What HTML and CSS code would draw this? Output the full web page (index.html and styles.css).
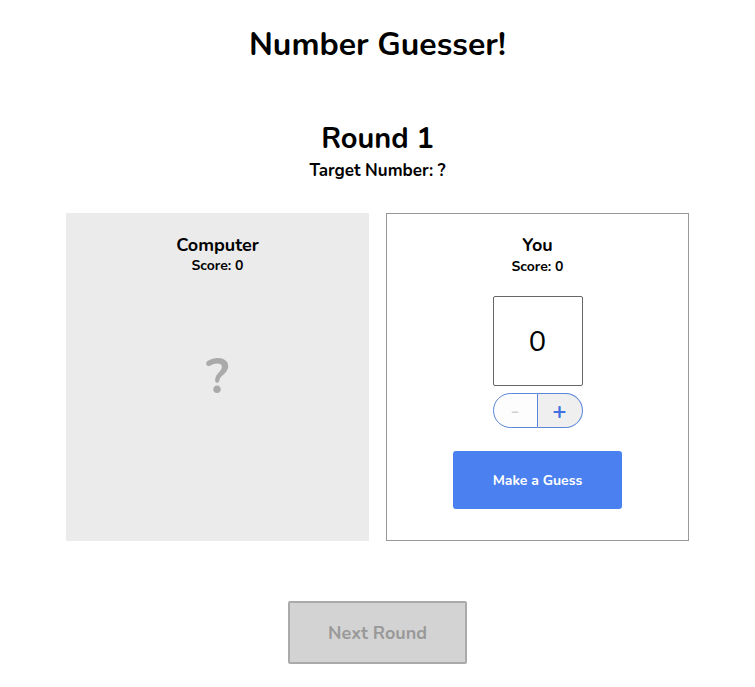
FILE: index.html
```html
<!DOCTYPE html>
<html>
<head>
<meta charset="utf-8">
<link rel="stylesheet" href="styles.css">
</head>
<body>
<div class="app">
  <h1 class="title">Number Guesser!</h1>
  <h2 class="round">Round 1</h2>
  <p class="target">Target Number: ?</p>
  <div class="board">
    <section class="panel panel-computer">
      <h3 class="name">Computer</h3>
      <p class="score">Score: 0</p>
      <div class="mystery">?</div>
    </section>
    <section class="panel panel-you">
      <h3 class="name">You</h3>
      <p class="score">Score: 0</p>
      <div class="guess-box">0</div>
      <div class="stepper">
        <button class="step step-minus" disabled>-</button>
        <button class="step step-plus">+</button>
      </div>
      <button class="guess-btn">Make a Guess</button>
    </section>
  </div>
  <div class="footer">
    <button class="next-btn" disabled>Next Round</button>
  </div>
</div>
</body>
</html>
```

FILE: styles.css
```css
body {
  margin: 8px;
  font-family: "Nunito", "Lato", "Open Sans", sans-serif;
  color: #000;
  background: #fff;
}
.app {
  display: flex;
  flex-direction: column;
  align-items: center;
}
.title {
  font-size: 32px;
  font-weight: 700;
  margin: 17px 0 0;
  line-height: 40px;
}
.round {
  font-size: 29px;
  font-weight: 700;
  margin: 56px 0 0;
  line-height: 36px;
}
.target {
  font-size: 17px;
  font-weight: 700;
  margin: 3px 0 0;
  line-height: 22px;
}
.board {
  display: flex;
  gap: 17px;
  margin-top: 31px;
}
.panel {
  box-sizing: border-box;
  width: 303px;
  height: 328px;
  display: flex;
  flex-direction: column;
  align-items: center;
}
.panel-computer {
  background: #ebebeb;
}
.panel-you {
  border: 1px solid #999;
}
.name {
  font-size: 18px;
  font-weight: 700;
  margin: 21px 0 0;
  line-height: 22px;
}
.panel-you .name {
  margin-top: 20px;
}
.score {
  font-size: 14px;
  font-weight: 700;
  margin: 0;
  line-height: 19px;
}
.panel-you .score {
  margin-top: 1px;
}
.mystery {
  font-size: 50px;
  font-weight: 700;
  color: #aaa;
  margin-top: 72px;
  line-height: 60px;
}
.guess-box {
  box-sizing: border-box;
  width: 90px;
  height: 90px;
  margin-top: 20px;
  border: 1px solid #666;
  border-radius: 2px;
  display: flex;
  align-items: center;
  justify-content: center;
  font-size: 29px;
}
.stepper {
  display: flex;
  margin-top: 7px;
}
.step {
  box-sizing: border-box;
  width: 45px;
  height: 35px;
  font-family: inherit;
  font-size: 22px;
  padding: 0;
  border: 1px solid #5b85d8;
  background: #fff;
  line-height: 1;
}
.step-minus {
  border-radius: 18px 0 0 18px;
  color: #d0d0d0;
  background: #fdfdfd;
}
.step-plus {
  border-left: none;
  border-radius: 0 18px 18px 0;
  color: #3f6fe0;
  background: #efefef;
  font-size: 24px;
  font-weight: 700;
}
.guess-btn {
  margin-top: 23px;
  width: 169px;
  height: 58px;
  background: #4a80f0;
  color: #fff;
  border: none;
  border-radius: 3px;
  font-family: inherit;
  font-size: 14px;
  font-weight: 700;
}
.footer {
  margin-top: 60px;
}
.next-btn {
  box-sizing: border-box;
  width: 179px;
  height: 63px;
  background: #d3d3d3;
  border: 2px solid #aaa;
  border-radius: 2px;
  color: #999;
  font-family: inherit;
  font-size: 18px;
  font-weight: 700;
}
```
